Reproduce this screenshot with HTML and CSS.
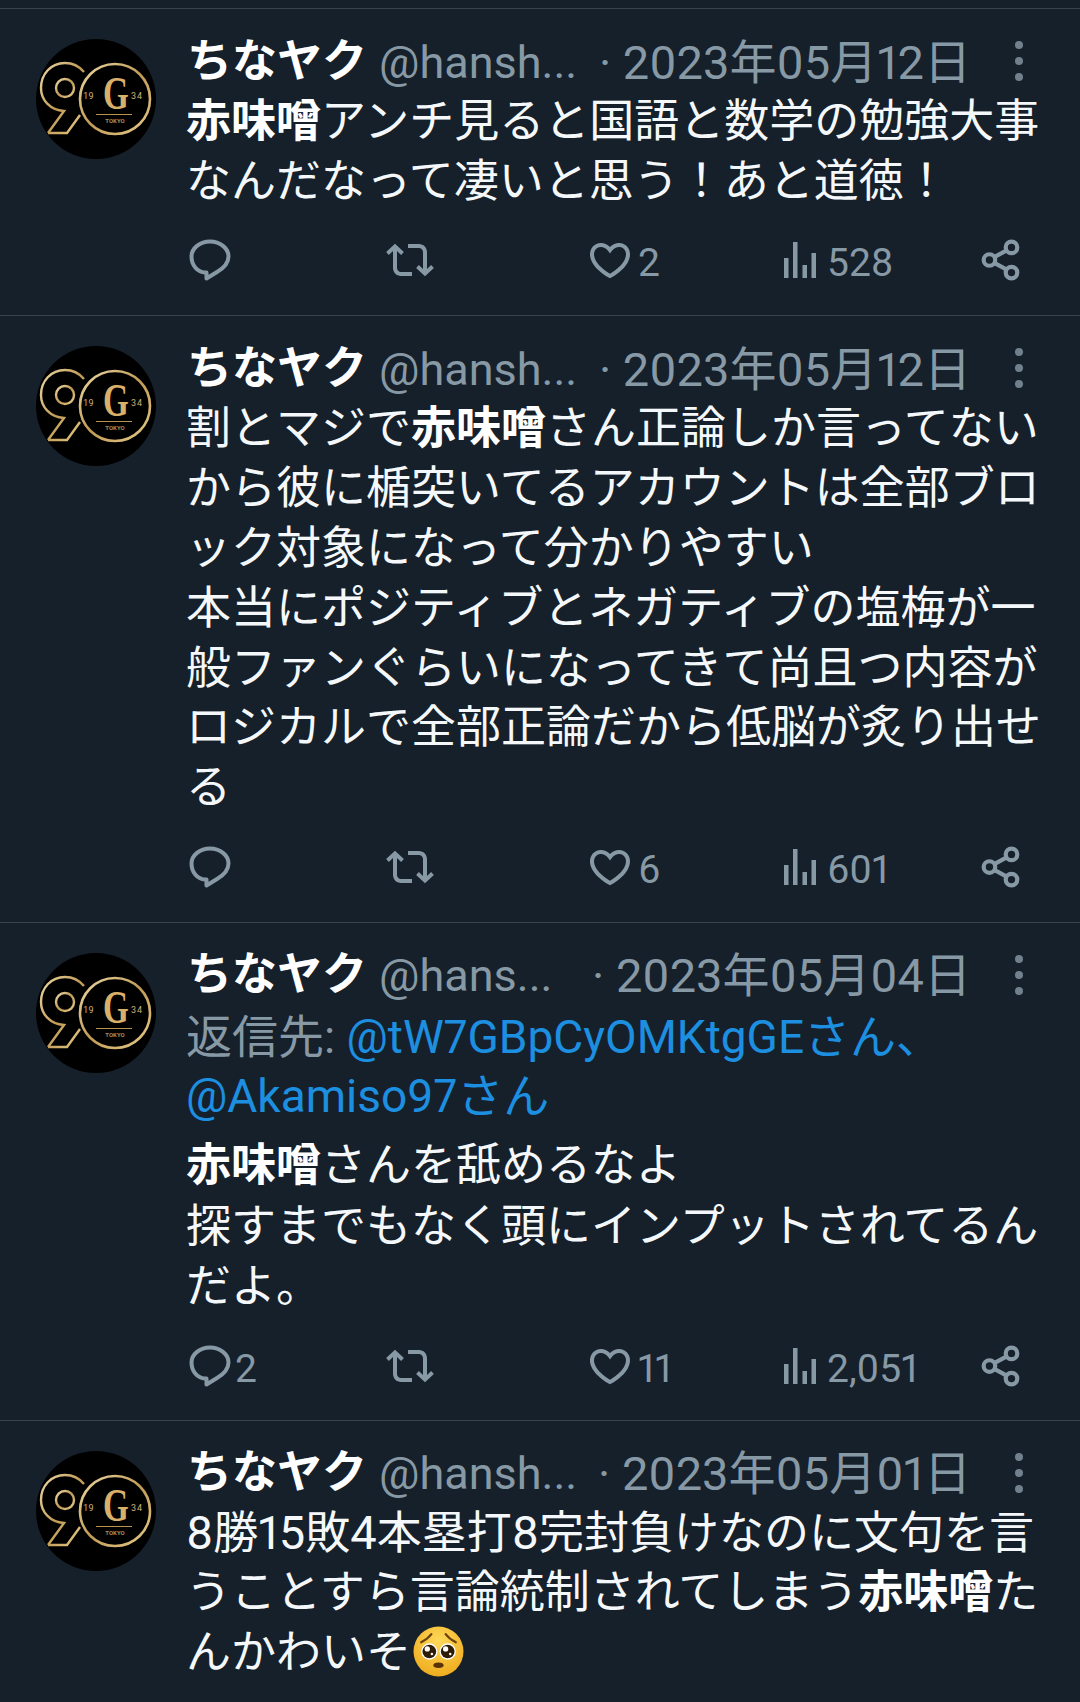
FILE: index.html
```html
<!DOCTYPE html>
<html lang="ja">
<head>
<meta charset="utf-8">
<title>ちなヤク</title>
<link rel="stylesheet" href="styles.css">
</head>
<body>
<svg class="defs" width="0" height="0" aria-hidden="true">
  <defs>
    <linearGradient id="gold" x1="0" y1="0" x2="1" y2="1">
      <stop offset="0" stop-color="#ecd9a6"/>
      <stop offset="0.5" stop-color="#c09a55"/>
      <stop offset="1" stop-color="#e6cb8a"/>
    </linearGradient>
    <radialGradient id="emoji-face" cx="0.5" cy="0.3" r="0.75">
      <stop offset="0" stop-color="#ffd95a"/>
      <stop offset="1" stop-color="#eda91a"/>
    </radialGradient>
    <symbol id="logo" viewBox="0 0 120 120">
      <circle cx="60" cy="60" r="60" fill="#000"/>
      <path d="M12 94 L28 72 C14 71 5 61 5 49 C5 35 15 24 29 24 C37 24 43 27 48 33 M44 76 L31 94 H12" fill="none" stroke="url(#gold)" stroke-width="2.400"/>
      <circle cx="29" cy="49" r="9" fill="none" stroke="url(#gold)" stroke-width="2.400"/>
      <circle cx="79" cy="60" r="35" fill="#000" stroke="url(#gold)" stroke-width="2.600"/>
      <text x="0" y="0" transform="translate(80 70) scale(0.72 1)" class="logo-g">G</text>
      <text x="53" y="60" class="logo-year">19</text>
      <text x="101" y="60" class="logo-year">34</text>
      <rect x="60" y="75" width="36" height="1" fill="#b8924f"/>
      <text x="79" y="84" class="logo-city">TOKYO</text>
    </symbol>
    <symbol id="i-comment" viewBox="0 0 42 42">
      <path d="M21 2.500C31 2.500 39.500 9 39.500 17.500C39.500 25 34 29.500 28 33L17.500 39.500V33.500H16C8 33 2.500 26 2.500 17.500C2.500 9 11 2.500 21 2.500Z" fill="none" stroke="currentColor" stroke-width="4" stroke-linejoin="round"/>
    </symbol>
    <symbol id="i-retweet" viewBox="0 0 24 24">
      <path fill="currentColor" d="M4.500 3.880l4.432 4.140-1.364 1.460L5.500 7.550V16c0 1.100.896 2 2 2H13v2H7.500c-2.209 0-4-1.790-4-4V7.550L1.432 9.480.068 8.020 4.500 3.880zM16.500 6H11V4h5.500c2.209 0 4 1.790 4 4v8.450l2.068-1.930 1.364 1.460-4.432 4.140-4.432-4.140 1.364-1.460 2.068 1.930V8c0-1.100-.896-2-2-2z"/>
    </symbol>
    <symbol id="i-heart" viewBox="0 0 24 24">
      <path fill="currentColor" d="M16.697 5.500c-1.222-.06-2.679.51-3.890 2.160l-.805 1.090-.806-1.090C9.984 6.010 8.526 5.440 7.304 5.500c-1.243.07-2.349.78-2.910 1.910-.552 1.120-.633 2.780.479 4.820 1.074 1.970 3.257 4.270 7.129 6.610 3.870-2.340 6.052-4.640 7.126-6.610 1.111-2.040 1.030-3.700.477-4.820-.561-1.130-1.666-1.840-2.908-1.910zm4.187 7.690c-1.351 2.480-4.001 5.120-8.379 7.670l-.503.3-.504-.3c-4.379-2.550-7.029-5.190-8.382-7.670-1.360-2.500-1.410-4.860-.514-6.670.887-1.790 2.647-2.910 4.601-3.010 1.651-.09 3.368.56 4.798 2.010 1.429-1.450 3.146-2.100 4.796-2.010 1.954.1 3.714 1.220 4.601 3.010.896 1.810.846 4.170-.514 6.670z"/>
    </symbol>
    <symbol id="i-chart" viewBox="0 0 32 36">
      <g fill="currentColor">
        <rect x="0" y="16" width="4.500" height="20"/>
        <rect x="9" y="0" width="4.500" height="36"/>
        <rect x="18.500" y="23" width="4.500" height="13"/>
        <rect x="27.500" y="11" width="4.500" height="25"/>
      </g>
    </symbol>
    <symbol id="i-share" viewBox="0 0 40 40">
      <g fill="none" stroke="currentColor" stroke-width="4">
        <circle cx="30" cy="8" r="5.500"/>
        <circle cx="9" cy="20" r="5.500"/>
        <circle cx="30" cy="32" r="5.500"/>
        <path d="M14 17L25 11M14 23L25 29"/>
      </g>
    </symbol>
  </defs>
</svg>

<main class="timeline">
  <article class="tweet">
    <svg class="avatar"><use href="#logo"/></svg>
    <div class="content">
      <header class="head">
        <span class="name">ちなヤク</span>
        <span class="handle">@hansh...</span>
        <span class="date">· 2023年05月12日</span>
        <span class="kebab"><i></i><i></i><i></i></span>
      </header>
      <p class="body"><b>赤味噌</b>アンチ見ると国語と数学の勉強大事<br>なんだなって凄いと思う！あと道徳！</p>
      <footer class="actions">
        <span class="act"><svg class="ic ic-comment"><use href="#i-comment"/></svg></span>
        <span class="act"><svg class="ic ic-retweet"><use href="#i-retweet"/></svg></span>
        <span class="act"><svg class="ic ic-heart"><use href="#i-heart"/></svg><span class="count">2</span></span>
        <span class="act act-view"><svg class="ic ic-chart"><use href="#i-chart"/></svg><span class="count">528</span></span>
        <span class="act"><svg class="ic ic-share"><use href="#i-share"/></svg></span>
      </footer>
    </div>
  </article>

  <article class="tweet">
    <svg class="avatar"><use href="#logo"/></svg>
    <div class="content">
      <header class="head">
        <span class="name">ちなヤク</span>
        <span class="handle">@hansh...</span>
        <span class="date">· 2023年05月12日</span>
        <span class="kebab"><i></i><i></i><i></i></span>
      </header>
      <p class="body">割とマジで<b>赤味噌</b>さん正論しか言ってない<br>から彼に楯突いてるアカウントは全部ブロ<br>ック対象になって分かりやすい<br>本当にポジティブとネガティブの塩梅が一<br>般ファンぐらいになってきて尚且つ内容が<br>ロジカルで全部正論だから低脳が炙り出せ<br>る</p>
      <footer class="actions">
        <span class="act"><svg class="ic ic-comment"><use href="#i-comment"/></svg></span>
        <span class="act"><svg class="ic ic-retweet"><use href="#i-retweet"/></svg></span>
        <span class="act"><svg class="ic ic-heart"><use href="#i-heart"/></svg><span class="count">6</span></span>
        <span class="act act-view"><svg class="ic ic-chart"><use href="#i-chart"/></svg><span class="count">601</span></span>
        <span class="act"><svg class="ic ic-share"><use href="#i-share"/></svg></span>
      </footer>
    </div>
  </article>

  <article class="tweet tweet-reply">
    <svg class="avatar"><use href="#logo"/></svg>
    <div class="content">
      <header class="head">
        <span class="name">ちなヤク</span>
        <span class="handle">@hans...</span>
        <span class="date">· 2023年05月04日</span>
        <span class="kebab"><i></i><i></i><i></i></span>
      </header>
      <p class="reply">返信先: <a>@tW7GBpCyOMKtgGEさん、</a><br><a>@Akamiso97さん</a></p>
      <p class="body"><b>赤味噌</b>さんを舐めるなよ<br>探すまでもなく頭にインプットされてるん<br>だよ。</p>
      <footer class="actions">
        <span class="act"><svg class="ic ic-comment"><use href="#i-comment"/></svg><span class="count">2</span></span>
        <span class="act"><svg class="ic ic-retweet"><use href="#i-retweet"/></svg></span>
        <span class="act"><svg class="ic ic-heart"><use href="#i-heart"/></svg><span class="count">11</span></span>
        <span class="act act-view"><svg class="ic ic-chart"><use href="#i-chart"/></svg><span class="count">2,051</span></span>
        <span class="act"><svg class="ic ic-share"><use href="#i-share"/></svg></span>
      </footer>
    </div>
  </article>

  <article class="tweet">
    <svg class="avatar"><use href="#logo"/></svg>
    <div class="content">
      <header class="head">
        <span class="name">ちなヤク</span>
        <span class="handle">@hansh...</span>
        <span class="date">· 2023年05月01日</span>
        <span class="kebab"><i></i><i></i><i></i></span>
      </header>
      <p class="body"><span class="num">8</span>勝<span class="num">15</span>敗<span class="num">4</span>本塁打<span class="num">8</span>完封負けなのに文句を言<br>うことすら言論統制されてしまう<b>赤味噌</b>た<br>んかわいそ<svg class="emoji" viewBox="0 0 50 50" role="img" aria-label="pleading face">
        <circle cx="25" cy="25" r="24.500" fill="url(#emoji-face)"/>
        <path d="M8 16C12 14 15 12 18 8M42 16C38 14 35 12 32 8" fill="none" stroke="#6b4310" stroke-width="2.200" stroke-linecap="round"/>
        <circle cx="16" cy="25" r="8" fill="#fff"/><circle cx="16" cy="25" r="6.700" fill="#2e1c06"/><circle cx="14" cy="22.500" r="2.600" fill="#fff"/><circle cx="18.500" cy="27.500" r="1.200" fill="#fff"/>
        <circle cx="34" cy="25" r="8" fill="#fff"/><circle cx="34" cy="25" r="6.700" fill="#2e1c06"/><circle cx="32" cy="22.500" r="2.600" fill="#fff"/><circle cx="36.500" cy="27.500" r="1.200" fill="#fff"/>
        <ellipse cx="25" cy="38.500" rx="5" ry="2.600" fill="#5a3208"/>
      </svg></p>
    </div>
  </article>
</main>
</body>
</html>
```

FILE: styles.css
```css
html, body {
  margin: 0;
  height: 1702px;
  overflow: hidden;
  background: #15202b;
}

body {
  padding-top: 8px;
  box-sizing: border-box;
  font-family: Roboto, "Noto Sans CJK JP", sans-serif;
  font-variant-numeric: proportional-nums;
  color: #f5f8fa;
}

.defs {
  position: absolute;
}

.timeline {
  display: flex;
  flex-direction: column;
}

.tweet {
  display: flex;
  border-top: 1.5px solid #38444d;
  padding: 20px 40px 37px 36px;
}

.tweet-reply {
  padding-bottom: 35.5px;
}

.avatar {
  width: 120px;
  height: 120px;
  flex: none;
  margin: 10px 30px 0 0;
}

.logo-g {
  font-family: "Liberation Serif", serif;
  font-weight: 700;
  font-size: 46px;
  text-anchor: middle;
  fill: #d9b06a;
}

.logo-year {
  font-family: Roboto, sans-serif;
  font-size: 9px;
  letter-spacing: 1px;
  text-anchor: middle;
  fill: #cdb27a;
}

.logo-city {
  font-family: Roboto, sans-serif;
  font-size: 6px;
  font-weight: 700;
  text-anchor: middle;
  fill: #a98d58;
}

.content {
  flex: 1;
  min-width: 0;
}

.head {
  display: flex;
  align-items: center;
  height: 60px;
  margin-bottom: 3px;
}

.name {
  flex: none;
  font-size: 45px;
  font-weight: 700;
  margin: 0 12px 0 1px;
  padding-bottom: 4px;
  color: #fff;
}

.handle {
  flex: none;
  white-space: nowrap;
  font-size: 45px;
  padding-top: 6px;
  color: #8899a6;
}

.date {
  flex: none;
  margin-left: auto;
  margin-top: -2px;
  font-size: 47px;
  color: #8899a6;
  white-space: nowrap;
}

.kebab {
  flex: none;
  width: 69px;
  display: flex;
  flex-direction: column;
  align-items: flex-end;
  gap: 8px;
  padding: 4px 17px 0 0;
  box-sizing: border-box;
}

.kebab i {
  width: 8px;
  height: 8px;
  border-radius: 50%;
  background: #71808c;
}

.body {
  margin: 0;
  font-size: 45px;
  line-height: 59.85px;
  white-space: nowrap;
  color: #f5f8fa;
}

.reply + .body {
  line-height: 60.5px;
}

.body b {
  font-weight: 700;
  color: #fff;
}

.num {
  font-size: 47px;
  line-height: 1;
}

.reply {
  margin: 5px 0 9px;
  font-size: 46px;
  line-height: 59.7px;
  color: #8899a6;
  white-space: nowrap;
}

.reply a {
  color: #1d8fe0;
}

.actions {
  display: grid;
  grid-template-columns: 197px 200px 198px 196px auto;
  align-items: center;
  height: 44px;
  margin-top: 22.5px;
  padding-left: 3px;
  font-size: 39px;
  color: #8899a6;
}

.act {
  display: flex;
  align-items: center;
  gap: 4px;
}

.act-view {
  gap: 11px;
}

.count {
  padding-top: 6px;
}

.ic {
  flex: none;
}

.ic-comment {
  width: 42px;
  height: 42px;
}

.ic-retweet {
  width: 48px;
  height: 48px;
}

.ic-heart {
  width: 48px;
  height: 48px;
}

.ic-chart {
  width: 32px;
  height: 36px;
}

.ic-share {
  width: 42px;
  height: 42px;
}

.emoji {
  width: 51px;
  height: 51px;
  margin-left: 2px;
  vertical-align: -9px;
}
```
